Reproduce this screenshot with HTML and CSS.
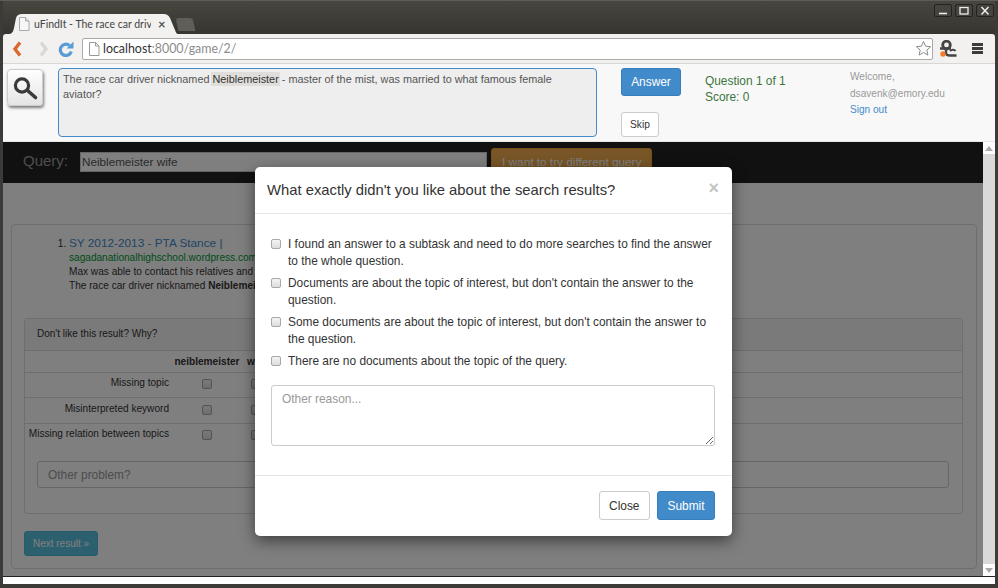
FILE: index.html
```html
<!DOCTYPE html>
<html>
<head>
    <meta charset="UTF-8">
    <meta name="viewport" content="width=device-width, initial-scale=1.0">
    <title>uFindIt - The race car driver</title>
    <link rel="stylesheet" href="styles.css">
</head>
<body>
    <div class="window">
        <!-- Browser title bar with tabs and window buttons -->
        <div class="titlebar">
            <div class="tab">
                <svg class="page-icon" width="12" height="14" viewBox="0 0 12 14"><path d="M1.500.5h6l3.500 3.500v9.500h-9.500z" fill="#f6f6f6" stroke="#aaa"/><path d="M7.500.5v3.500h3.500" fill="#ddd" stroke="#aaa"/></svg>
                <span class="tab-title">uFindIt - The race car driv</span>
                <span class="tab-close">×</span>
            </div>
            <div class="new-tab"></div>
            <div class="window-buttons">
                <span class="win-btn"><svg width="12" height="10" viewBox="0 0 12 10"><path d="M2 7.500h8" stroke="#eee" stroke-width="1.600"/></svg></span>
                <span class="win-btn"><svg width="12" height="10" viewBox="0 0 12 10"><rect x="2" y="1.500" width="8" height="6.500" fill="none" stroke="#eee" stroke-width="1.300"/></svg></span>
                <span class="win-btn"><svg width="12" height="10" viewBox="0 0 12 10"><path d="M2.500 1l7 7.500M9.500 1l-7 7.500" stroke="#eee" stroke-width="1.500"/></svg></span>
            </div>
        </div>

        <!-- Browser toolbar -->
        <div class="toolbar">
            <svg class="nav-back" width="10" height="16" viewBox="0 0 10 16"><path d="M8 1.500L3 8l5 6.500" fill="none" stroke="#d9692f" stroke-width="3.400"/></svg>
            <svg class="nav-forward" width="10" height="16" viewBox="0 0 10 16"><path d="M2 1.500L7 8l-5 6.500" fill="none" stroke="#d8d8d6" stroke-width="3.400"/></svg>
            <svg class="nav-reload" width="16" height="16" viewBox="0 0 16 16"><path d="M13.300 10.500A5.600 5.600 0 1 1 11.500 4.500" fill="none" stroke="#5b9bd5" stroke-width="3.200"/><path d="M8.500 7.500h7V.5z" fill="#5b9bd5"/></svg>
            <div class="omnibox">
                <svg width="12" height="14" viewBox="0 0 12 14"><path d="M1.500.5h6l3.500 3.500v9.500h-9.500z" fill="#fff" stroke="#999"/><path d="M7.500.5v3.500h3.500" fill="none" stroke="#999"/></svg>
                <span class="url"><span class="host">localhost</span>:8000/game/2/</span>
                <svg class="star" width="17" height="17" viewBox="0 0 17 17"><path d="M8.500 1.500l2.100 4.700 5 .5-3.800 3.400 1.100 5-4.400-2.600-4.400 2.600 1.100-5L1.400 6.700l5-.5z" fill="#fbfbfb" stroke="#8c8c8c"/></svg>
            </div>
            <svg class="ext-icon" width="17" height="17" viewBox="0 0 17 17">
                <circle cx="6.500" cy="5" r="3.800" fill="none" stroke="#444" stroke-width="2.800"/>
                <path d="M0 8.500h11M6 8.500v4.500c0 2 2 2.500 4 2.500h6.500" fill="none" stroke="#444" stroke-width="2.400"/>
                <path d="M10 11c2-2 4.500-1.500 5.500 0" fill="none" stroke="#444" stroke-width="2"/>
                <circle cx="3" cy="14" r="2.700" fill="#f47b2a"/>
            </svg>
            <div class="menu-icon"><span></span><span></span><span></span></div>
        </div>

        <!-- Game header -->
        <header class="game-head">
            <button class="search-toggle">
                <svg width="28" height="28" viewBox="0 0 28 28"><circle cx="11" cy="11.500" r="6.600" fill="none" stroke="#3a3a3a" stroke-width="3.200"/><path d="M16.500 16.500l8 7" stroke="#3a3a3a" stroke-width="3.600" stroke-linecap="round"/></svg>
            </button>
            <div class="question-box">The race car driver nicknamed <mark>Neiblemeister</mark> - master of the mist, was married to what famous female aviator?</div>
            <div class="game-actions">
                <button class="btn btn-primary btn-answer">Answer</button>
                <button class="btn btn-default btn-skip">Skip</button>
            </div>
            <div class="game-score">
                <div>Question 1 of 1</div>
                <div>Score: 0</div>
            </div>
            <div class="user-info">
                <div>Welcome,</div>
                <div>dsavenk@emory.edu</div>
                <a href="#">Sign out</a>
            </div>
        </header>

        <div class="page">
            <div class="viewport">
                <div class="query-bar">
                    <label class="query-label" for="query">Query:</label>
                    <input class="query-input" id="query" type="text" value="Neiblemeister wife">
                    <button class="btn btn-warning">I want to try different query</button>
                </div>

                <div class="results">
                    <ol class="result-list">
                        <li>
                            <a class="result-title" href="#">SY 2012-2013 - PTA Stance |</a>
                            <div class="result-url">sagadanationalhighschool.wordpress.com</div>
                            <div class="result-text">Max was able to contact his relatives and</div>
                            <div class="result-text">The race car driver nicknamed <b>Neiblemeister</b></div>
                        </li>
                    </ol>

                    <div class="feedback">
                        <div class="feedback-head">Don't like this result? Why?</div>
                        <table class="feedback-table">
                            <tr>
                                <th></th>
                                <th>neiblemeister</th>
                                <th>wife</th>
                            </tr>
                            <tr>
                                <td class="reason">Missing topic</td>
                                <td><input type="checkbox"></td>
                                <td><input type="checkbox"></td>
                            </tr>
                            <tr>
                                <td class="reason">Misinterpreted keyword</td>
                                <td><input type="checkbox"></td>
                                <td><input type="checkbox"></td>
                            </tr>
                            <tr>
                                <td class="reason">Missing relation between topics</td>
                                <td><input type="checkbox"></td>
                                <td><input type="checkbox"></td>
                            </tr>
                        </table>
                        <input class="other-problem" type="text" placeholder="Other problem?">
                    </div>

                    <button class="btn btn-info">Next result »</button>
                </div>

                <div class="backdrop"></div>

                <!-- Dialog over the dimmed page -->
                <div class="modal">
                    <div class="modal-header">
                        <h4>What exactly didn't you like about the search results?</h4>
                        <span class="modal-close">×</span>
                    </div>
                    <div class="modal-body">
                        <label class="option"><input type="checkbox"><span>I found an answer to a subtask and need to do more searches to find the answer to the whole question.</span></label>
                        <label class="option"><input type="checkbox"><span>Documents are about the topic of interest, but don't contain the answer to the question.</span></label>
                        <label class="option"><input type="checkbox"><span>Some documents are about the topic of interest, but don't contain the answer to the question.</span></label>
                        <label class="option"><input type="checkbox"><span>There are no documents about the topic of the query.</span></label>
                        <textarea class="other-reason" placeholder="Other reason..."></textarea>
                    </div>
                    <div class="modal-footer">
                        <button class="btn btn-default">Close</button>
                        <button class="btn btn-primary">Submit</button>
                    </div>
                </div>
            </div>

            <div class="scrollbar">
                <div class="scroll-btn"><svg width="8" height="5" viewBox="0 0 8 5"><path d="M4 0l4 5H0z" fill="#aaa"/></svg></div>
                <div class="scroll-btn"><svg width="8" height="5" viewBox="0 0 8 5"><path d="M0 0h8L4 5z" fill="#aaa"/></svg></div>
            </div>
        </div>
        <div class="statusbar"></div>
    </div>
</body>
</html>
```

FILE: styles.css
```css
* {
    box-sizing: border-box;
}

html, body {
    margin: 0;
    height: 100%;
    overflow: hidden;
}

body {
    font-family: "Liberation Sans", Arial, sans-serif;
    font-size: 11.9px;
    color: #333;
}

button, input, textarea {
    font-family: inherit;
}

input[type="checkbox"] {
    appearance: none;
    background: linear-gradient(#f4f4f4, #dcdcdc);
    border: 1px solid #a8a8a8;
    border-radius: 2px;
}

.window {
    width: 998px;
    height: 588px;
    display: flex;
    flex-direction: column;
    padding: 0 3px 4px 3px;
    background: #3c3b37;
    border-top: 1px solid #5e5d58;
}

/* browser chrome */
.titlebar {
    height: 33px;
    flex: none;
    display: flex;
    align-items: flex-end;
    padding-left: 5px;
    background: linear-gradient(#47463f, #363530);
}

.tab {
    width: 170px;
    height: 20px;
    display: flex;
    align-items: center;
    gap: 4px;
    padding: 0 0 0 10px;
    background: #f2f1f0;
    clip-path: path("M0 20 C4 20 5 18 6 14 L8 4 C9 1 11 0 14 0 H156 C159 0 160 1 162 4 L167 16 C168 19 169 20 170 20 Z");
    font-family: Lato, "Liberation Sans", sans-serif;
    font-size: 10.500px;
    color: #444;
    white-space: nowrap;
}

.tab-title {
    width: 117px;
    overflow: hidden;
}

.tab-close {
    margin-left: 3px;
    font-size: 13px;
    font-weight: bold;
    color: #555;
}

.new-tab {
    width: 17px;
    height: 13px;
    margin: 0 0 3px -1px;
    background: #5f5e59;
    border-radius: 3px 3px 1px 1px;
    transform: skewX(12deg);
}

.window-buttons {
    margin-left: auto;
    align-self: flex-start;
    margin-top: 3px;
    padding-right: 1px;
    display: flex;
    gap: 3px;
}

.win-btn {
    width: 18px;
    height: 13px;
    display: flex;
    align-items: center;
    justify-content: center;
    border: 1px solid #24231f;
    border-radius: 2px;
    background: #45443e;
}

.toolbar {
    height: 30px;
    flex: none;
    display: flex;
    align-items: center;
    padding-left: 9px;
    background: #f2f1f0;
    border-bottom: 1px solid #d8d7d5;
    border-radius: 3px 3px 0 0;
}

.nav-back {
    margin-right: 17px;
}

.nav-forward {
    margin-right: 9px;
}

.nav-reload {
    margin-right: 8px;
}

.omnibox {
    width: 851px;
    height: 22px;
    display: flex;
    align-items: center;
    gap: 3px;
    padding: 0 0 0 5px;
    background: #fff;
    border: 1px solid #a9a9a7;
    border-radius: 2px;
    font-family: Lato, "Liberation Sans", sans-serif;
    font-size: 12.400px;
    color: #8c8c8c;
}

.host {
    color: #333;
}

.star {
    margin-left: auto;
}

.ext-icon {
    margin-left: 7px;
}

.menu-icon {
    margin-left: 15px;
    width: 11px;
    display: flex;
    flex-direction: column;
    gap: 1.500px;
}

.menu-icon span {
    height: 2.500px;
    background: #3c3c3c;
}

/* game header */
.game-head {
    height: 78px;
    flex: none;
    display: flex;
    padding-top: 4px;
    background: #f8f8f8;
    border-bottom: 1px solid #e7e7e7;
    font-size: 10.850px;
}

.search-toggle {
    width: 36px;
    height: 37px;
    margin: 1px 15px 0 4px;
    padding: 0;
    display: flex;
    align-items: center;
    justify-content: center;
    background: linear-gradient(#fff, #e4e4e4);
    border: 1px solid #ccc;
    border-radius: 4px;
    box-shadow: 1px 2px 3px rgba(0, 0, 0, 0.5);
}

.question-box {
    width: 539px;
    height: 69px;
    padding: 3px 4px;
    background: #eee;
    border: 1px solid #428bca;
    border-radius: 4px;
    color: #555;
    line-height: 15px;
}

mark {
    background: #dfdeda;
    box-shadow: 0 0 0 1px #dfdeda;
    color: #333;
}

.game-actions {
    width: 84px;
    margin-left: 24px;
    display: flex;
    flex-direction: column;
    align-items: flex-start;
    gap: 16px;
}

.game-score {
    width: 145px;
    padding-top: 4.500px;
    color: #3c763d;
    font-size: 11.900px;
    line-height: 16px;
}

.user-info {
    padding-top: 1px;
    font-size: 10.100px;
    line-height: 16.500px;
    color: #999;
}

.user-info a {
    color: #428bca;
    text-decoration: none;
}

/* buttons */
.btn {
    display: inline-block;
    border: 1px solid transparent;
    border-radius: 3px;
    font-size: 11.900px;
    cursor: pointer;
}

.btn-primary {
    background: #428bca;
    border-color: #357ebd;
    color: #fff;
}

.btn-default {
    background: #fff;
    border-color: #ccc;
    color: #333;
}

.btn-warning {
    height: 28px;
    padding: 0 10px;
    background: #f0ad4e;
    border-color: #eea236;
    color: #fff;
    font-size: 11.800px;
}

.btn-info {
    width: 74px;
    height: 25px;
    padding: 0;
    background: #5bc0de;
    border-color: #46b8da;
    color: #fff;
    font-size: 10px;
}

.btn-answer {
    width: 60px;
    height: 28px;
}

.btn-skip {
    width: 38px;
    height: 25px;
    font-size: 10.200px;
    padding: 0;
}

/* page under the dialog */
.page {
    flex: 1;
    display: flex;
    min-height: 0;
    border-bottom: 1px solid #222;
}

.viewport {
    position: relative;
    flex: 1;
    background: #fff;
    overflow: hidden;
}

.query-bar {
    height: 41px;
    display: flex;
    align-items: flex-start;
    padding: 6px 0 0 20px;
    background: #222;
}

.query-label {
    width: 57px;
    margin-top: 4px;
    color: #9d9d9d;
    font-size: 15px;
}

.query-input {
    width: 407px;
    height: 20px;
    margin: 4px 4px 0 0;
    padding: 0 1px 2px 1px;
    background: #fff;
    border: 1px solid #ccc;
    font-size: 11.700px;
    color: #555;
}

.results {
    margin: 41px 6px 0 8px;
    height: 345px;
    padding: 11px 13px 0 12px;
    border: 1px solid #ddd;
    border-radius: 4px;
}

.result-list {
    margin: 0;
    padding-left: 45px;
    height: 82px;
    font-size: 10.100px;
    line-height: 14px;
}

.result-title {
    color: #428bca;
    font-size: 11.800px;
    line-height: 14px;
    text-decoration: none;
}

.result-url {
    color: #093;
    white-space: nowrap;
}

.result-text {
    white-space: nowrap;
}

.feedback {
    height: 196px;
    margin-bottom: 17px;
    border: 1px solid #ddd;
    border-radius: 3px;
}

.feedback-head {
    height: 32px;
    padding: 9px 12px;
    background: #f5f5f5;
    border-bottom: 1px solid #ddd;
    font-size: 10px;
}

.feedback-table {
    border-collapse: collapse;
    table-layout: fixed;
    width: 100%;
    font-size: 10.100px;
}

.feedback-table th {
    height: 21px;
    width: 68px;
    font-size: 10.100px;
}

.feedback-table th:first-child {
    width: 148px;
}

.feedback-table th:last-child {
    width: auto;
    padding-left: 6px;
    text-align: left;
}

.feedback-table td {
    height: 25.500px;
    padding: 1px 0 0 0;
    text-align: center;
    border-top: 1px solid #ddd;
}

.feedback-table tr:last-child td {
    height: 25px;
}

.feedback-table td:last-child {
    padding-left: 10px;
    text-align: left;
}

.feedback-table td.reason {
    padding: 0 4px 4px 0;
    text-align: right;
    white-space: nowrap;
}

.feedback-table input {
    width: 10px;
    height: 10px;
    margin: 0;
}

.other-problem {
    display: block;
    width: 912px;
    height: 27px;
    margin: 13px 0 0 12px;
    padding: 0 10px;
    border: 1px solid #ccc;
    border-radius: 3px;
    font-size: 11.900px;
}

.other-problem::placeholder {
    color: #999;
}

.backdrop {
    position: absolute;
    inset: 0;
    background: rgba(0, 0, 0, 0.5);
}

/* dialog */
.modal {
    position: absolute;
    left: 252px;
    top: 25px;
    width: 477px;
    height: 369px;
    display: flex;
    flex-direction: column;
    background: #fff;
    border-radius: 5px;
    box-shadow: 0 5px 15px rgba(0, 0, 0, 0.5);
}

.modal-header {
    height: 47px;
    flex: none;
    display: flex;
    justify-content: space-between;
    padding: 14px 13px 0 12px;
    border-bottom: 1px solid #e5e5e5;
}

.modal-header h4 {
    margin: 0;
    font-size: 14.800px;
    font-weight: 500;
    line-height: 18px;
}

.modal-close {
    margin-top: -3px;
    color: #c4c4c4;
    font-size: 18px;
    font-weight: bold;
}

.modal-body {
    flex: 1;
    padding: 22.400px 16px 0 16px;
}

.option {
    display: flex;
    gap: 7px;
    margin-bottom: 5.300px;
    line-height: 16.700px;
}

.option input {
    flex: none;
    width: 10px;
    height: 10px;
    margin: 3px 0 0 0;
}

.other-reason {
    display: block;
    width: 444px;
    height: 61px;
    margin-top: 15.600px;
    padding: 6px 10px;
    border: 1px solid #ccc;
    border-radius: 3px;
    font-size: 11.900px;
}

.other-reason::placeholder {
    color: #999;
}

.modal-footer {
    height: 61px;
    flex: none;
    display: flex;
    justify-content: flex-end;
    gap: 7px;
    padding: 15px 17px 0 0;
    border-top: 1px solid #e5e5e5;
}

.modal-footer .btn {
    height: 29px;
    padding: 0 9.500px;
}

/* right scrollbar */
.scrollbar {
    width: 12px;
    flex: none;
    display: flex;
    flex-direction: column;
    justify-content: space-between;
    background: #d9d9d7;
}

.scroll-btn {
    height: 12px;
    display: flex;
    align-items: center;
    justify-content: center;
    background: #fdfdfd;
}

.statusbar {
    height: 7px;
    flex: none;
    background: #fff;
}
```
